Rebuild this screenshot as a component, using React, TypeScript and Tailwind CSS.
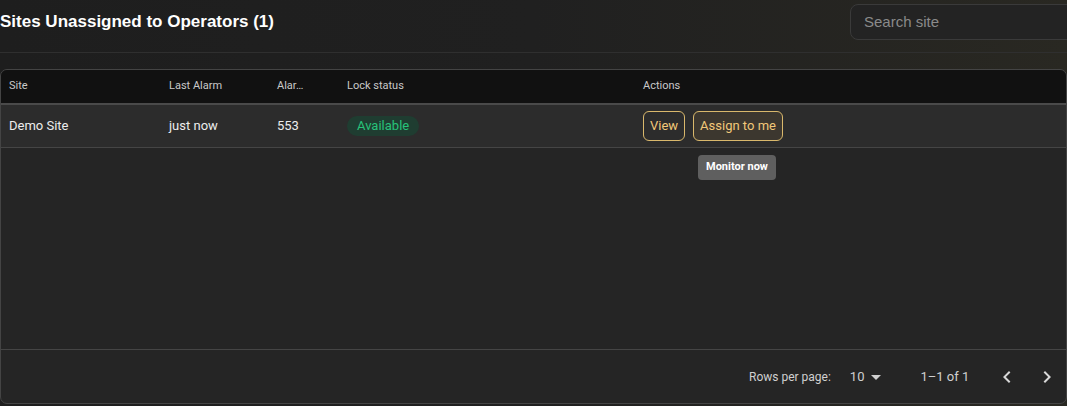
import React from "react";

export default function App() {
  return (
    <div
      className="w-[1067px] h-[406px] overflow-hidden text-white bg-[linear-gradient(90deg,#1e1e1e_0%,#202020_50%,#292822_100%)]"
      style={{ fontFamily: "Roboto, 'Liberation Sans', sans-serif" }}
    >
      <div className="h-[53px] flex items-start justify-between border-b border-[#2f2f2f]">
        <h1
          className="mt-[9px] text-[17px] font-bold leading-[26px] text-white"
          style={{ fontFamily: "'Liberation Sans', Arial, sans-serif" }}
        >
          Sites Unassigned to Operators (1)
        </h1>
        <div className="mt-[4px] mr-[-20px] w-[237px] h-[36px] rounded-[8px] border border-[#3a3a3a] bg-[#232323] flex items-center pl-[13px]">
          <span
            className="text-[15px] text-[#8a8a8a]"
            style={{ fontFamily: "'Liberation Sans', Arial, sans-serif" }}
          >
            Search site
          </span>
        </div>
      </div>

      <div className="mt-[16px] w-[1067px] h-[335px] rounded-[7px] border border-[#444] bg-[#252525] overflow-hidden flex flex-col">
        <div className="h-[35px] bg-[#111111] flex items-center text-[11px] text-[#c9c9c9] border-b-2 border-[#4a4a4a] shrink-0">
          <div className="w-[168px] pl-[8px]">Site</div>
          <div className="w-[108px]">Last Alarm</div>
          <div className="w-[70px]">Alar…</div>
          <div className="w-[296px]">Lock status</div>
          <div>Actions</div>
        </div>
        <div className="h-[43px] bg-[#2c2c2c] flex items-center text-[13px] font-normal text-[#ececec] border-b border-[#454545] shrink-0">
          <div className="w-[168px] pl-[8px]">Demo Site</div>
          <div className="w-[108px]">just now</div>
          <div className="w-[70px]">553</div>
          <div className="w-[296px]">
            <span className="inline-flex items-center h-[20px] px-[10px] rounded-full bg-[#1f3d31] text-[#27c27a] font-normal">
              Available
            </span>
          </div>
          <div className="flex gap-[8px] relative">
            <button className="h-[30px] px-[6px] rounded-[6px] border border-[#d9b86c] text-[#f2c879] text-[13px] font-normal">
              View
            </button>
            <button className="h-[30px] px-[6px] rounded-[6px] border border-[#d9b86c] bg-[#3c372f] text-[#f2c879] text-[13px] font-normal">
              Assign to me
            </button>
            <div className="absolute left-[55px] top-[44px] h-[25px] px-[8px] rounded-[4px] bg-[#5f5f5f] text-[11px] font-bold text-white flex items-center whitespace-nowrap">
              Monitor now
            </div>
          </div>
        </div>
        <div className="flex-1" />
        <div className="h-[54px] border-t border-[#454545] flex items-center text-[12px] text-[#d0d0d0] shrink-0">
          <div className="ml-[748px]">Rows per page:</div>
          <div className="ml-[19px] flex items-center text-[13px]">
            10
            <svg width="10" height="5" viewBox="0 0 10 5" className="ml-[7px] mt-[1px]">
              <path d="M0 0 L10 0 L5 5 Z" fill="#d0d0d0" />
            </svg>
          </div>
          <div className="ml-[39px] text-[13px]">1–1 of 1</div>
          <svg width="24" height="24" viewBox="0 0 24 24" className="ml-[26px]">
            <path d="M15.41 7.41 14 6l-6 6 6 6 1.41-1.41L10.83 12z" fill="#d8d8d8" />
          </svg>
          <svg width="24" height="24" viewBox="0 0 24 24" className="ml-[16px]">
            <path d="M10 6 8.59 7.41 13.17 12l-4.58 4.59L10 18l6-6z" fill="#d8d8d8" />
          </svg>
        </div>
      </div>
    </div>
  );
}
